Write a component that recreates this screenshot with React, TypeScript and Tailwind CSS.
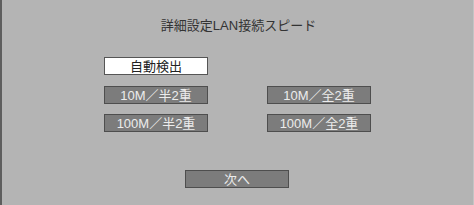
const font = { fontFamily: '"Liberation Sans", "Noto Sans CJK JP", sans-serif' };

function Btn({ label, selected = false }: { label: string; selected?: boolean }) {
  return (
    <div
      className={
        'w-[104px] h-[18px] flex items-center justify-center border text-[13px] leading-none ' +
        (selected
          ? 'bg-white border-[#555] text-[#222]'
          : 'bg-[#7c7c7c] border-[#4e4e4e] text-[#ececec]')
      }
    >
      {label}
    </div>
  );
}

export default function App() {
  return (
    <div
      className="w-[474px] h-[205px] bg-[#b4b4b4] border-l-[2px] border-l-[#5e5e5e] border-r border-r-[#c4c4c4] flex flex-col"
      style={font}
    >
      <div className="h-[18px]" />
      <div className="pl-[2px] text-center text-[13px] leading-[16px] text-[#333]">
        詳細設定LAN接続スピード
      </div>
      <div className="h-[23px]" />
      <div className="ml-[102px] grid grid-cols-[104px_104px] gap-x-[59px]">
        <Btn label="自動検出" selected />
        <div />
      </div>
      <div className="ml-[102px] mt-[11px] grid grid-cols-[104px_104px] gap-x-[59px] gap-y-[10px]">
        <Btn label="10M／半2重" />
        <Btn label="10M／全2重" />
        <Btn label="100M／半2重" />
        <Btn label="100M／全2重" />
      </div>
      <div className="ml-[183px] mt-[38px]">
        <Btn label="次へ" />
      </div>
    </div>
  );
}
